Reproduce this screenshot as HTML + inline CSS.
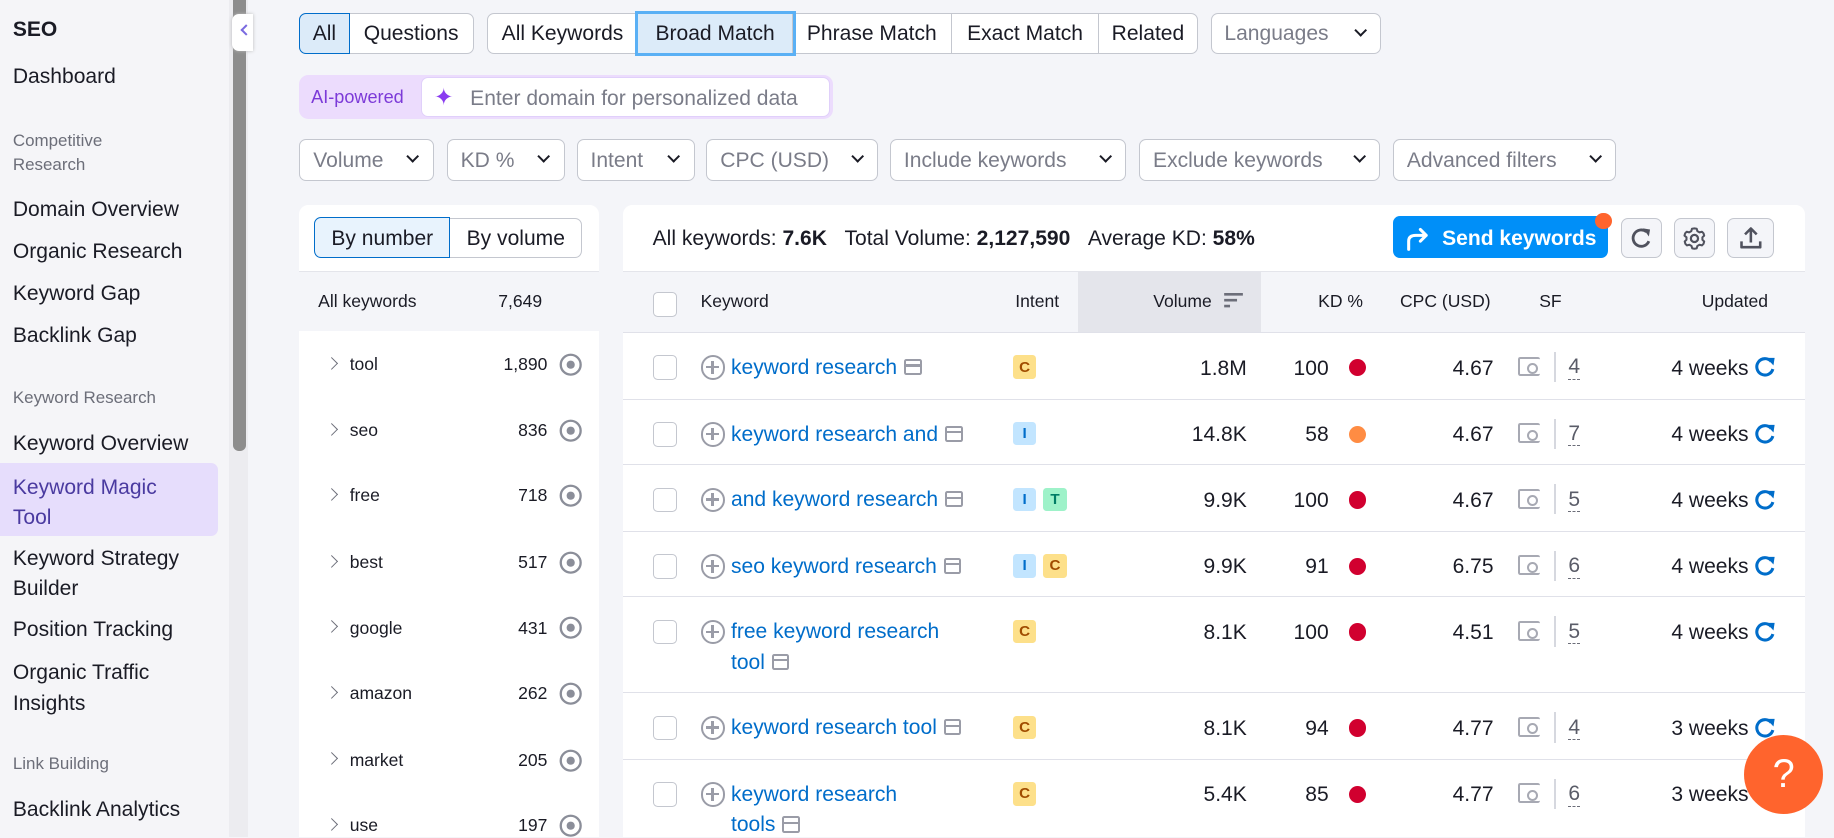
<!DOCTYPE html>
<html><head><meta charset="utf-8"><style>
*{box-sizing:border-box;margin:0;padding:0}
html,body{width:1834px;height:838px;overflow:hidden;background:#f4f5f9}
#w{zoom:1.1696;width:1568px;height:716px;position:relative;font-family:"Liberation Sans",sans-serif;color:#1a1b25;overflow:hidden}
.a{position:absolute}
.sb{left:0;top:0;width:196px;height:716px;background:#f5f5f8}
.sb div{position:absolute;left:11px;font-size:18px;white-space:nowrap}
.sb .g{font-size:14.5px;color:#6c6e79}
.grp{position:absolute;height:35px;border:1px solid #c4c7cf;border-radius:6px;background:#fff;display:flex;overflow:visible}
.grp span{display:flex;align-items:center;justify-content:center;font-size:18px;border-right:1px solid #c4c7cf;height:100%;padding-top:2px}
.grp span:last-child{border-right:none}
.dd{position:absolute;top:119px;height:36px;border:1px solid #c4c7cf;border-radius:6px;background:#fff;color:#7a7c88;font-size:18px;display:flex;align-items:center;padding-left:11px;padding-top:1px}
.chev{position:absolute;right:13px;top:10px;width:8px;height:8px;border-right:2.3px solid #1a1b25;border-bottom:2.3px solid #1a1b25;transform:rotate(45deg)}
.lr{position:absolute;left:256px;width:256px;height:56px;font-size:15px}
.lr .n{position:absolute;right:44px;top:20px}
.lr .t{position:absolute;left:43px;top:20px}
.lr .c{position:absolute;left:24px;top:24px;width:8px;height:8px;border-right:1.6px solid #6c6e79;border-top:1.6px solid #6c6e79;transform:rotate(45deg)}
.eye{position:absolute;right:14px;top:19px}
.row{position:absolute;left:533px;width:1010px;background:#fff;border-top:1.5px solid #e0e1e9;font-size:18px}
.cb{position:absolute;left:25px;width:21px;height:21px;border:1px solid #c4c7cf;border-radius:4px;background:#fff}
.kw{position:absolute;left:92px;color:#006dca;line-height:26px}
.plus{position:absolute;left:66px;width:21px;height:21px;border:2px solid #9a9ca7;border-radius:50%}
.plus:before{content:"";position:absolute;left:7.6px;top:3px;width:1.8px;height:11px;background:#9a9ca7}
.plus:after{content:"";position:absolute;left:3px;top:7.6px;width:11px;height:1.8px;background:#9a9ca7}
.ser{display:inline-block;width:15px;height:14px;border:2px solid #9a9ca7;border-radius:2px;vertical-align:-1px;margin-left:6px;position:relative}
.ser:after{content:"";position:absolute;left:0;right:0;top:3px;height:2px;background:#9a9ca7}
.tag{position:absolute;width:20px;height:20px;border-radius:3px;font-size:13px;font-weight:bold;display:flex;align-items:center;justify-content:center}
.C{background:#fde08a;color:#a04c00}.I{background:#c2e5ff;color:#006dca}.T{background:#9ef2c9;color:#007c65}
.num{position:absolute;text-align:right}
.dot{position:absolute;width:15px;height:15px;border-radius:50%;background:#d1002f}
.sfi{position:absolute;left:765px;width:19px;height:17px;border:2px solid #a7a9b3;border-right:none;border-radius:2px}
.sfi:after{content:"";position:absolute;left:6px;top:4px;width:6px;height:6px;border:2px solid #a7a9b3;border-radius:50%}
.vl{position:absolute;left:796px;width:1px;height:26px;background:#d6d8df}
.sfn{position:absolute;left:808px;border-bottom:1.5px dashed #6c6e79;line-height:20px;color:#5a5c68}
.upd{position:absolute;right:48px}
.rf{position:absolute;right:24px}
</style></head><body><div id="w">
<svg width="0" height="0" style="position:absolute"><defs>
<symbol id="eye" viewBox="0 0 20 20"><circle cx="10" cy="10" r="8.5" fill="none" stroke="#8b8e99" stroke-width="2"/><circle cx="10" cy="10" r="3.5" fill="#8b8e99"/></symbol>
<symbol id="rf" viewBox="0 0 20 20"><path d="M15.5 5.5A7 7 0 1 0 17 12" fill="none" stroke="#006dca" stroke-width="2.6"/><path d="M11.5 2.5l7 0-1 6.5z" fill="#006dca"/></symbol>
</defs></svg>
<div class="a sb">
<div style="top:15px;font-weight:bold;font-size:18px">SEO</div>
<div style="top:56px">Dashboard</div>
<div class="g" style="top:110px;line-height:21px">Competitive<br>Research</div>
<div style="top:169px">Domain Overview</div>
<div style="top:205px">Organic Research</div>
<div style="top:241px">Keyword Gap</div>
<div style="top:277px">Backlink Gap</div>
<div class="g" style="top:332px">Keyword Research</div>
<div style="top:369px">Keyword Overview</div>
<div style="left:0;top:396px;width:186px;height:62px;background:#e6ddfc;border-radius:0 6px 6px 0"></div>
<div style="top:404px;line-height:26px;color:#4a3aa0">Keyword Magic<br>Tool</div>
<div style="top:465px;line-height:26px">Keyword Strategy<br>Builder</div>
<div style="top:528px">Position Tracking</div>
<div style="top:563px;line-height:26px">Organic Traffic<br>Insights</div>
<div class="g" style="top:645px">Link Building</div>
<div style="top:682px">Backlink Analytics</div>
</div>
<div class="a" style="left:196px;top:0;width:16px;height:716px;background:#ececf0"></div>
<div class="a" style="left:199px;top:0;width:11px;height:386px;background:#8d8d8d;border-radius:0 0 5px 5px"></div>
<div class="a" style="left:198px;top:12px;width:18px;height:32px;background:#fff;border-radius:6px 0 0 6px;box-shadow:0 0 3px #bbb"></div>
<div class="a" style="left:207px;top:22px;width:7px;height:7px;border-left:2px solid #7a6ae0;border-bottom:2px solid #7a6ae0;transform:rotate(45deg)"></div>

<div class="grp" style="left:256px;top:11px;width:149px"><span style="width:43px;background:#dcebf9;border:1px solid #006dca;border-radius:6px 0 0 6px;margin:-1px 0 -1px -1px;height:35px">All</span><span style="flex:1">Questions</span></div>
<div class="grp" style="left:416px;top:11px;width:608px"><span style="width:129px">All Keywords</span><span style="width:132px;background:#dcebf9;outline:3px solid #5ab0f5;position:relative;z-index:2">Broad Match</span><span style="width:136px">Phrase Match</span><span style="width:126px">Exact Match</span><span style="flex:1">Related</span></div>
<div class="dd" style="top:11px;left:1035px;width:146px;height:35px">Languages<i class="chev"></i></div>

<div class="a" style="left:256px;top:64px;width:456px;height:38px;background:#ecdcfd;border-radius:8px"></div>
<div class="a" style="left:266px;top:74px;font-size:15.5px;color:#7c3ad8">AI-powered</div>
<div class="a" style="left:360px;top:66px;width:350px;height:34px;background:#fff;border:1px solid #e0d0fa;border-radius:6px"></div>
<div class="a" style="left:371px;top:71px;font-size:20px;color:#8a3cf0">✦</div>
<div class="a" style="left:402px;top:74px;font-size:18px;color:#7a7c88">Enter domain for personalized data</div>

<div class="dd" style="left:256px;width:115px">Volume<i class="chev"></i></div>
<div class="dd" style="left:382px;width:101px">KD %<i class="chev"></i></div>
<div class="dd" style="left:493px;width:101px">Intent<i class="chev"></i></div>
<div class="dd" style="left:604px;width:147px">CPC (USD)<i class="chev"></i></div>
<div class="dd" style="left:761px;width:202px">Include keywords<i class="chev"></i></div>
<div class="dd" style="left:974px;width:206px">Exclude keywords<i class="chev"></i></div>
<div class="dd" style="left:1191px;width:191px">Advanced filters<i class="chev"></i></div>

<div class="a" style="left:256px;top:175px;width:256px;height:560px;background:#fff;border-radius:8px"></div>
<div class="grp" style="left:269px;top:186px;width:229px;height:35px"><span style="width:116px;background:#e8f3fd;border:1px solid #006dca;border-radius:6px 0 0 6px;margin:-1px 0 -1px -1px;height:35px">By number</span><span style="flex:1">By volume</span></div>
<div class="a" style="left:256px;top:232px;width:256px;height:51px;background:#f4f5f9;border-top:1px solid #e4e5eb"></div>
<div class="a" style="left:272px;top:249px;font-size:15px">All keywords</div>
<div class="a" style="left:426px;top:249px;font-size:15px">7,649</div>
<div class="lr" style="top:283px"><i class="c"></i><span class="t">tool</span><span class="n">1,890</span><svg class="eye" width="20" height="20"><use href="#eye"/></svg></div>
<div class="lr" style="top:339px"><i class="c"></i><span class="t">seo</span><span class="n">836</span><svg class="eye" width="20" height="20"><use href="#eye"/></svg></div>
<div class="lr" style="top:395px"><i class="c"></i><span class="t">free</span><span class="n">718</span><svg class="eye" width="20" height="20"><use href="#eye"/></svg></div>
<div class="lr" style="top:452px"><i class="c"></i><span class="t">best</span><span class="n">517</span><svg class="eye" width="20" height="20"><use href="#eye"/></svg></div>
<div class="lr" style="top:508px"><i class="c"></i><span class="t">google</span><span class="n">431</span><svg class="eye" width="20" height="20"><use href="#eye"/></svg></div>
<div class="lr" style="top:564px"><i class="c"></i><span class="t">amazon</span><span class="n">262</span><svg class="eye" width="20" height="20"><use href="#eye"/></svg></div>
<div class="lr" style="top:621px"><i class="c"></i><span class="t">market</span><span class="n">205</span><svg class="eye" width="20" height="20"><use href="#eye"/></svg></div>
<div class="lr" style="top:677px"><i class="c"></i><span class="t">use</span><span class="n">197</span><svg class="eye" width="20" height="20"><use href="#eye"/></svg></div>

<div class="a" style="left:533px;top:175px;width:1010px;height:560px;background:#fff;border-radius:8px"></div>
<div class="a" style="left:558px;top:194px;font-size:18px">All keywords: <b>7.6K</b>&nbsp;&nbsp;&nbsp;Total Volume: <b>2,127,590</b>&nbsp;&nbsp;&nbsp;Average KD: <b>58%</b></div>
<div class="a" style="left:1191px;top:185px;width:184px;height:36px;background:#008ff8;border-radius:6px;color:#fff;font-size:18px;font-weight:bold;padding:9px 0 0 42px">Send keywords</div>
<svg class="a" style="left:1200px;top:193px" width="24" height="22" viewBox="0 0 24 22"><path d="M4 20V13Q4 8 10 8H19M14 3l5 5-5 5" fill="none" stroke="#fff" stroke-width="2.6" stroke-linecap="round" stroke-linejoin="round"/></svg>
<div class="a" style="left:1364px;top:182px;width:14px;height:14px;border-radius:50%;background:#ff642d"></div>
<div class="a" style="left:1386px;top:186px;width:35px;height:35px;border:1px solid #c4c7cf;border-radius:6px;background:#f4f5f9"></div>
<svg class="a" style="left:1393px;top:193px" width="21" height="21" viewBox="0 0 21 21"><path d="M15 5A7 7 0 1 0 17 13" fill="none" stroke="#50525e" stroke-width="2.4"/><path d="M12 2l6 1-1 6z" fill="#50525e"/></svg>
<div class="a" style="left:1431px;top:186px;width:35px;height:35px;border:1px solid #c4c7cf;border-radius:6px;background:#f4f5f9"></div>
<svg class="a" style="left:1437px;top:192px" width="23" height="23" viewBox="0 0 24 24"><circle cx="12" cy="12" r="3.2" fill="none" stroke="#50525e" stroke-width="2"/><path d="M12 3l2 .3.6 2.2 1.9 1.1 2.2-.6 1.4 1.4 .6 2.1-1.6 1.5v2.2l1.6 1.5-.6 2.1-1.4 1.4-2.2-.6-1.9 1.1-.6 2.2-2 .3-2-.3-.6-2.2-1.9-1.1-2.2.6-1.4-1.4-.6-2.1 1.6-1.5v-2.2L3.1 9.5l.6-2.1 1.4-1.4 2.2.6 1.9-1.1L9.8 3.3z" fill="none" stroke="#50525e" stroke-width="1.8" stroke-linejoin="round"/></svg>
<div class="a" style="left:1477px;top:186px;width:40px;height:35px;border:1px solid #c4c7cf;border-radius:6px;background:#f4f5f9"></div>
<svg class="a" style="left:1486px;top:192px" width="22" height="22" viewBox="0 0 22 22"><path d="M11 15V3M6 8l5-5 5 5M3 14v5h16v-5" fill="none" stroke="#50525e" stroke-width="2.2" stroke-linejoin="round"/></svg>

<div class="a" style="left:533px;top:232px;width:1010px;height:52px;background:#f4f5f9;border-top:1px solid #e4e5eb"></div>
<div class="a" style="left:922px;top:232px;width:156px;height:52px;background:#e4e5eb"></div>
<div class="cb" style="left:558px;top:250px"></div>
<div class="a" style="top:249px;left:599px;font-size:15px">Keyword</div>
<div class="a" style="top:249px;left:868px;font-size:15px">Intent</div>
<div class="a" style="top:249px;left:986px;font-size:15px">Volume</div>
<svg class="a" style="left:1046px;top:250px" width="18" height="14"><path d="M1 2h16M1 7h11M1 12h5" stroke="#6c6e79" stroke-width="2.2"/></svg>
<div class="a" style="top:249px;left:1127px;font-size:15px">KD %</div>
<div class="a" style="top:249px;left:1197px;font-size:15px">CPC (USD)</div>
<div class="a" style="top:249px;left:1316px;font-size:15px">SF</div>
<div class="a" style="top:249px;left:1455px;font-size:15px">Updated</div>

<div class="row" style="top:284px;height:57px"><i class="cb" style="top:19px"></i><i class="plus" style="top:19px"></i><span class="kw" style="top:17px">keyword research<i class="ser"></i></span><span class="tag C" style="left:333px;top:19px">C</span><span class="num" style="right:477px;top:20px">1.8M</span><span class="num" style="right:407px;top:20px">100</span><i class="dot" style="left:620px;top:22px"></i><span class="num" style="right:266px;top:20px">4.67</span><i class="sfi" style="top:20px"></i><i class="vl" style="top:16px"></i><span class="sfn" style="top:19px">4</span><span class="upd" style="top:20px">4 weeks</span><svg class="rf" style="top:19px" width="20" height="20"><use href="#rf"/></svg></div>
<div class="row" style="top:341px;height:57px"><i class="cb" style="top:19px"></i><i class="plus" style="top:19px"></i><span class="kw" style="top:17px">keyword research and<i class="ser"></i></span><span class="tag I" style="left:333px;top:19px">I</span><span class="num" style="right:477px;top:20px">14.8K</span><span class="num" style="right:407px;top:20px">58</span><i class="dot" style="left:620px;top:22px;background:#ff8c43"></i><span class="num" style="right:266px;top:20px">4.67</span><i class="sfi" style="top:20px"></i><i class="vl" style="top:16px"></i><span class="sfn" style="top:19px">7</span><span class="upd" style="top:20px">4 weeks</span><svg class="rf" style="top:19px" width="20" height="20"><use href="#rf"/></svg></div>
<div class="row" style="top:397px;height:57px"><i class="cb" style="top:19px"></i><i class="plus" style="top:19px"></i><span class="kw" style="top:17px">and keyword research<i class="ser"></i></span><span class="tag I" style="left:333px;top:19px">I</span><span class="tag T" style="left:359px;top:19px">T</span><span class="num" style="right:477px;top:20px">9.9K</span><span class="num" style="right:407px;top:20px">100</span><i class="dot" style="left:620px;top:22px"></i><span class="num" style="right:266px;top:20px">4.67</span><i class="sfi" style="top:20px"></i><i class="vl" style="top:16px"></i><span class="sfn" style="top:19px">5</span><span class="upd" style="top:20px">4 weeks</span><svg class="rf" style="top:19px" width="20" height="20"><use href="#rf"/></svg></div>
<div class="row" style="top:454px;height:57px"><i class="cb" style="top:19px"></i><i class="plus" style="top:19px"></i><span class="kw" style="top:17px">seo keyword research<i class="ser"></i></span><span class="tag I" style="left:333px;top:19px">I</span><span class="tag C" style="left:359px;top:19px">C</span><span class="num" style="right:477px;top:20px">9.9K</span><span class="num" style="right:407px;top:20px">91</span><i class="dot" style="left:620px;top:22px"></i><span class="num" style="right:266px;top:20px">6.75</span><i class="sfi" style="top:20px"></i><i class="vl" style="top:16px"></i><span class="sfn" style="top:19px">6</span><span class="upd" style="top:20px">4 weeks</span><svg class="rf" style="top:19px" width="20" height="20"><use href="#rf"/></svg></div>
<div class="row" style="top:510px;height:82px"><i class="cb" style="top:19px"></i><i class="plus" style="top:19px"></i><span class="kw" style="top:17px">free keyword research<br>tool<i class="ser"></i></span><span class="tag C" style="left:333px;top:19px">C</span><span class="num" style="right:477px;top:20px">8.1K</span><span class="num" style="right:407px;top:20px">100</span><i class="dot" style="left:620px;top:22px"></i><span class="num" style="right:266px;top:20px">4.51</span><i class="sfi" style="top:20px"></i><i class="vl" style="top:16px"></i><span class="sfn" style="top:19px">5</span><span class="upd" style="top:20px">4 weeks</span><svg class="rf" style="top:19px" width="20" height="20"><use href="#rf"/></svg></div>
<div class="row" style="top:592px;height:57px"><i class="cb" style="top:19px"></i><i class="plus" style="top:19px"></i><span class="kw" style="top:17px">keyword research tool<i class="ser"></i></span><span class="tag C" style="left:333px;top:19px">C</span><span class="num" style="right:477px;top:20px">8.1K</span><span class="num" style="right:407px;top:20px">94</span><i class="dot" style="left:620px;top:22px"></i><span class="num" style="right:266px;top:20px">4.77</span><i class="sfi" style="top:20px"></i><i class="vl" style="top:16px"></i><span class="sfn" style="top:19px">4</span><span class="upd" style="top:20px">3 weeks</span><svg class="rf" style="top:19px" width="20" height="20"><use href="#rf"/></svg></div>
<div class="row" style="top:649px;height:82px"><i class="cb" style="top:19px"></i><i class="plus" style="top:19px"></i><span class="kw" style="top:17px">keyword research<br>tools<i class="ser"></i></span><span class="tag C" style="left:333px;top:19px">C</span><span class="num" style="right:477px;top:20px">5.4K</span><span class="num" style="right:407px;top:20px">85</span><i class="dot" style="left:620px;top:22px"></i><span class="num" style="right:266px;top:20px">4.77</span><i class="sfi" style="top:20px"></i><i class="vl" style="top:16px"></i><span class="sfn" style="top:19px">6</span><span class="upd" style="top:20px">3 weeks</span></div>

<div class="a" style="left:1491px;top:628px;width:68px;height:68px;border-radius:50%;background:#ff642d;color:#fff;font-size:34px;text-align:center;line-height:68px">?</div>
</div></body></html>
